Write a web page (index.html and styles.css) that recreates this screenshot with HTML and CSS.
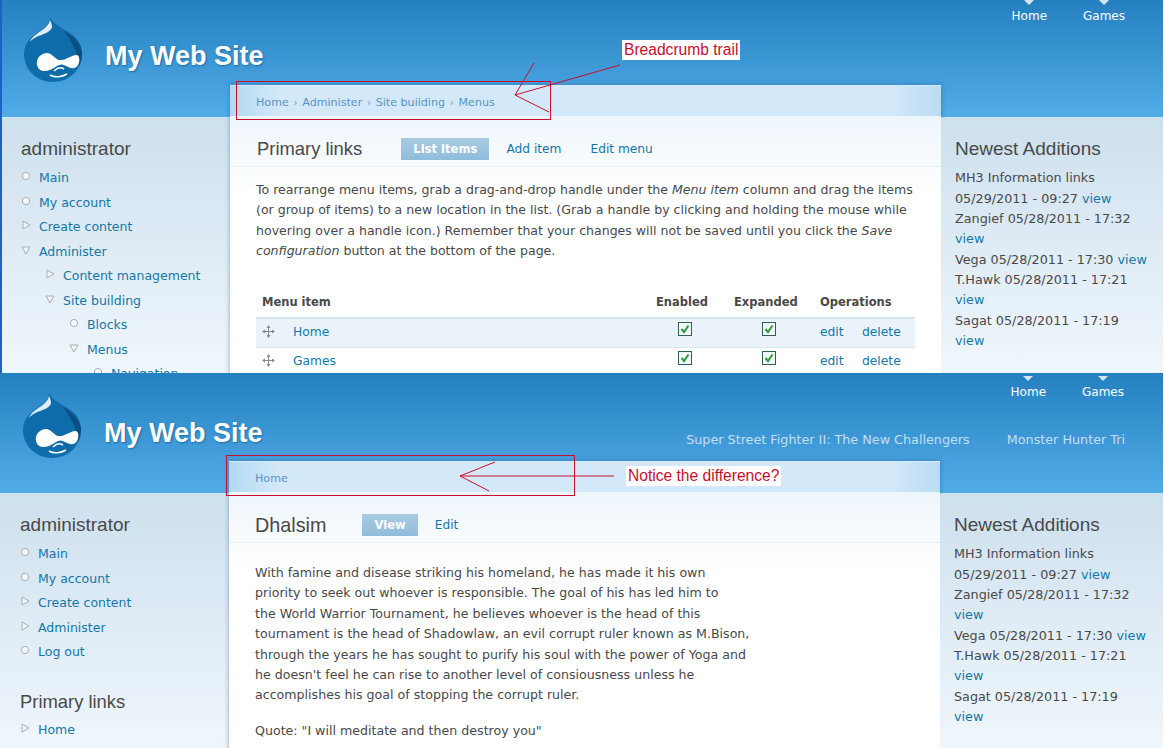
FILE: index.html
```html
<!DOCTYPE html>
<html>
  <head>
    <title>My Web Site</title>
    <link rel="stylesheet" href="styles.css">
  </head>
  <body>
    <svg class="defs" width="0" height="0">
      <defs>
        <symbol id="leaf" viewBox="0 0 10 10"><circle cx="5" cy="5" r="3.6" fill="#f6f8f9" stroke="#a9adb0"/></symbol>
        <symbol id="closed" viewBox="0 0 10 10"><path d="M2 1 L9 5 L2 9 Z" fill="#f3f6f8" stroke="#a9adb0"/></symbol>
        <symbol id="open" viewBox="0 0 10 10"><path d="M1 2 L9 2 L5 9 Z" fill="#f3f6f8" stroke="#a9adb0"/></symbol>
        <symbol id="drag" viewBox="0 0 13 13">
          <path d="M6.5 1 V12 M1 6.5 H12" stroke="#8a8a8a" fill="none"/>
          <path d="M6.5 0 L8.5 3 H4.5 Z M6.5 13 L8.5 10 H4.5 Z M0 6.5 L3 4.5 V8.5 Z M13 6.5 L10 4.5 V8.5 Z" fill="#8a8a8a"/>
        </symbol>
        <symbol id="check" viewBox="0 0 14 14">
          <rect x="0.5" y="0.5" width="13" height="13" fill="#f2f6f4" stroke="#2f5f5c"/>
          <path d="M3.5 7 L6 10 L10.5 3.5" fill="none" stroke="#2f9a3c" stroke-width="2"/>
        </symbol>
        <symbol id="drop" viewBox="0 0 58 65">
          <path d="M26 0 C26 9 16 13 9 19 C3 24 0 30 0 37 C0 53 13 65 29 65 C45 65 58 53 58 37 C58 20 44 15 36 10 C31 7 28 4 26 0 Z" fill="#0f6cab"/>
          <path d="M40 14 C50 20 58 27 58 37 C58 41 57 45 55 49 C55 38 49 26 40 14 Z" fill="#0b4f85"/>
          <path d="M26 3 C25 10 17 13 10 19 C7 22 6 24 6 25 C12 17 26 18 28 10 C28 7 27 5 26 3 Z" fill="#dfeef8"/>
          <path d="M13 44 C14 39 19 36 23 36 C28 36 31 42 35 43 C41 44 49 37 53 38 C56 39 56 45 54 48 C51 53 46 51 42 49 C39 47 36 47 33 49 C29 52 24 54 20 54 C15 54 12 49 13 44 Z" fill="#fff"/>
          <path d="M26 58 C31 61 38 60 43 57 M30 54 C33 51 37 50 40 52" fill="none" stroke="#fff" stroke-width="1.6"/>
        </symbol>
      </defs>
    </svg>

    <div class="page">
      <section class="shot shot-first">
        <header class="top">
          <svg class="logo"><use href="#drop"/></svg>
          <h1 class="site-name">My Web Site</h1>
          <div class="top-links">
            <ul class="primary-nav">
              <li><a href="#">Home</a></li>
              <li><a href="#">Games</a></li>
            </ul>
          </div>
        </header>
        <div class="columns">
          <aside class="sidebar">
            <h2>administrator</h2>
            <ul class="menu">
              <li><svg class="bullet"><use href="#leaf"/></svg><a href="#">Main</a></li>
              <li><svg class="bullet"><use href="#leaf"/></svg><a href="#">My account</a></li>
              <li><svg class="bullet"><use href="#closed"/></svg><a href="#">Create content</a></li>
              <li><svg class="bullet"><use href="#open"/></svg><a href="#">Administer</a>
                <ul class="menu">
                  <li><svg class="bullet"><use href="#closed"/></svg><a href="#">Content management</a></li>
                  <li><svg class="bullet"><use href="#open"/></svg><a href="#">Site building</a>
                    <ul class="menu">
                      <li><svg class="bullet"><use href="#leaf"/></svg><a href="#">Blocks</a></li>
                      <li><svg class="bullet"><use href="#open"/></svg><a href="#">Menus</a>
                        <ul class="menu">
                          <li><svg class="bullet"><use href="#leaf"/></svg><a href="#">Navigation</a></li>
                        </ul>
                      </li>
                    </ul>
                  </li>
                </ul>
              </li>
            </ul>
          </aside>
          <main class="card">
            <div class="breadcrumb">
              <a href="#">Home</a> <span class="sep">›</span> <a href="#">Administer</a> <span class="sep">›</span> <a href="#">Site building</a> <span class="sep">›</span> <a href="#">Menus</a>
            </div>
            <div class="title-row">
              <h2 class="title">Primary links</h2>
              <ul class="tabs">
                <li class="active"><a href="#">List items</a></li>
                <li><a href="#">Add item</a></li>
                <li><a href="#">Edit menu</a></li>
              </ul>
            </div>
            <div class="content">
              <p>To rearrange menu items, grab a drag-and-drop handle under the <em>Menu item</em> column and drag the items (or group of items) to a new location in the list. (Grab a handle by clicking and holding the mouse while hovering over a handle icon.) Remember that your changes will not be saved until you click the <em>Save configuration</em> button at the bottom of the page.</p>
              <table class="items">
                <colgroup>
                  <col class="col-item">
                  <col class="col-enabled">
                  <col class="col-expanded">
                  <col class="col-edit">
                  <col class="col-delete">
                </colgroup>
                <thead>
                  <tr>
                    <th>Menu item</th>
                    <th>Enabled</th>
                    <th>Expanded</th>
                    <th colspan="2">Operations</th>
                  </tr>
                </thead>
                <tbody>
                  <tr class="odd">
                    <td><svg class="drag"><use href="#drag"/></svg><a href="#">Home</a></td>
                    <td class="cell-enabled"><svg class="check"><use href="#check"/></svg></td>
                    <td class="cell-expanded"><svg class="check"><use href="#check"/></svg></td>
                    <td><a href="#">edit</a></td>
                    <td><a href="#">delete</a></td>
                  </tr>
                  <tr>
                    <td><svg class="drag"><use href="#drag"/></svg><a href="#">Games</a></td>
                    <td class="cell-enabled"><svg class="check"><use href="#check"/></svg></td>
                    <td class="cell-expanded"><svg class="check"><use href="#check"/></svg></td>
                    <td><a href="#">edit</a></td>
                    <td><a href="#">delete</a></td>
                  </tr>
                </tbody>
              </table>
            </div>
          </main>
          <aside class="sidebar sidebar-right">
            <h2>Newest Additions</h2>
            <div class="newest">
              <div>MH3 Information links</div>
              <div>05/29/2011 - 09:27 <a href="#">view</a></div>
              <div>Zangief 05/28/2011 - 17:32</div>
              <div><a href="#">view</a></div>
              <div>Vega 05/28/2011 - 17:30 <a href="#">view</a></div>
              <div>T.Hawk 05/28/2011 - 17:21</div>
              <div><a href="#">view</a></div>
              <div>Sagat 05/28/2011 - 17:19</div>
              <div><a href="#">view</a></div>
            </div>
          </aside>
        </div>
      </section>

      <section class="shot shot-second">
        <header class="top">
          <svg class="logo"><use href="#drop"/></svg>
          <h1 class="site-name">My Web Site</h1>
          <div class="top-links">
            <ul class="primary-nav">
              <li><a href="#">Home</a></li>
              <li><a href="#">Games</a></li>
            </ul>
            <ul class="secondary-nav">
              <li><a href="#">Super Street Fighter II: The New Challengers</a></li>
              <li><a href="#">Monster Hunter Tri</a></li>
            </ul>
          </div>
        </header>
        <div class="columns">
          <aside class="sidebar">
            <h2>administrator</h2>
            <ul class="menu">
              <li><svg class="bullet"><use href="#leaf"/></svg><a href="#">Main</a></li>
              <li><svg class="bullet"><use href="#leaf"/></svg><a href="#">My account</a></li>
              <li><svg class="bullet"><use href="#closed"/></svg><a href="#">Create content</a></li>
              <li><svg class="bullet"><use href="#closed"/></svg><a href="#">Administer</a></li>
              <li><svg class="bullet"><use href="#leaf"/></svg><a href="#">Log out</a></li>
            </ul>
            <h2 class="block-gap">Primary links</h2>
            <ul class="menu">
              <li><svg class="bullet"><use href="#closed"/></svg><a href="#">Home</a></li>
            </ul>
          </aside>
          <main class="card">
            <div class="breadcrumb"><a href="#">Home</a></div>
            <div class="title-row">
              <h2 class="title title-node">Dhalsim</h2>
              <ul class="tabs">
                <li class="active"><a href="#">View</a></li>
                <li><a href="#">Edit</a></li>
              </ul>
            </div>
            <div class="content">
              <p class="story">With famine and disease striking his homeland, he has made it his own<br>
              priority to seek out whoever is responsible. The goal of his has led him to<br>
              the World Warrior Tournament, he believes whoever is the head of this<br>
              tournament is the head of Shadowlaw, an evil corrupt ruler known as M.Bison,<br>
              through the years he has sought to purify his soul with the power of Yoga and<br>
              he doesn't feel he can rise to another level of consiousness unless he<br>
              accomplishes his goal of stopping the corrupt ruler.</p>
              <p class="quote">Quote: "I will meditate and then destroy you"</p>
            </div>
          </main>
          <aside class="sidebar sidebar-right">
            <h2>Newest Additions</h2>
            <div class="newest">
              <div>MH3 Information links</div>
              <div>05/29/2011 - 09:27 <a href="#">view</a></div>
              <div>Zangief 05/28/2011 - 17:32</div>
              <div><a href="#">view</a></div>
              <div>Vega 05/28/2011 - 17:30 <a href="#">view</a></div>
              <div>T.Hawk 05/28/2011 - 17:21</div>
              <div><a href="#">view</a></div>
              <div>Sagat 05/28/2011 - 17:19</div>
              <div><a href="#">view</a></div>
            </div>
          </aside>
        </div>
      </section>

      <svg class="marks" width="1164" height="748">
        <g fill="none" stroke="#c8102e">
          <rect x="236.5" y="81.5" width="314" height="38"/>
          <path d="M534 63 L515 95 L620 65 M515 95 L549 112"/>
          <rect x="226.5" y="455.5" width="348" height="40"/>
          <path d="M495 462 L460 476 L489 491 M460 476 H614"/>
        </g>
      </svg>
      <span class="note note-one">Breadcrumb trail</span>
      <span class="note note-two">Notice the difference?</span>
    </div>
  </body>
</html>
```

FILE: styles.css
```css
html,
body {
  margin: 0;
  padding: 0;
  background-color: #fff;
}

body {
  font-family: "DejaVu Sans", Verdana, sans-serif;
  font-size: 12px;
  color: #494949;
}

a {
  color: #1278a8;
  text-decoration: none;
}

ul {
  list-style: none;
  margin: 0;
  padding: 0;
}

.defs {
  position: absolute;
}

.page {
  position: relative;
  width: 1164px;
  height: 748px;
  overflow: hidden;
}

.shot {
  overflow: hidden;
  display: flex;
  flex-direction: column;
  width: 1163px;
  box-sizing: border-box;
}

.shot-first {
  height: 373px;
  border-left: 2px solid #1a62c4;
}

.shot-second {
  height: 375px;
}

/* header */
.top {
  flex: none;
  display: flex;
  height: 118px;
  box-sizing: border-box;
  background: linear-gradient(#2580c0, #52ace8);
  border-bottom: 1px solid #cfe6f5;
}

.shot-second .top {
  height: 121px;
  padding-top: 3px;
}

.logo {
  flex: none;
  width: 58px;
  height: 65px;
  margin: 17px 0 0 22px;
}

.shot-second .logo {
  margin-left: 23px;
}

.site-name {
  flex: none;
  margin: 39px 0 0 23px;
  font-family: "Liberation Sans", Arial, sans-serif;
  font-size: 27px;
  line-height: 34px;
  color: #fff;
  text-shadow: 1px 1px 2px #1d6da6;
}

.shot-second .site-name {
  margin-top: 40px;
}

.top-links {
  flex: 1;
  display: flex;
  flex-direction: column;
  align-items: flex-end;
  padding-right: 37px;
}

.shot-second .top-links {
  padding-right: 38px;
}

.primary-nav {
  display: flex;
  gap: 36px;
  height: 56px;
  padding-right: 1px;
}

.primary-nav li {
  position: relative;
  padding-top: 9px;
  line-height: 15px;
}

.primary-nav li::before {
  content: "";
  position: absolute;
  top: 0;
  left: 50%;
  margin-left: -5px;
  border-left: 5px solid transparent;
  border-right: 5px solid transparent;
  border-top: 5px solid #d6e6f3;
}

.primary-nav a {
  color: #fff;
}

.secondary-nav {
  display: flex;
  gap: 37px;
  font-size: 12.75px;
  line-height: 15px;
}

.secondary-nav a {
  color: #c3dff3;
}

/* columns */
.columns {
  flex: 1;
  display: grid;
  grid-template-columns: 228px 711px 1fr;
  min-height: 0;
}

.shot-second .columns {
  grid-template-columns: 229px 711px 1fr;
}

.sidebar {
  padding: 20px 8px 0 19px;
  height: 420px;
  background: linear-gradient(#cde0ee, #eef5fb 240px);
}

.shot-second .sidebar {
  padding-left: 20px;
}

.sidebar h2,
.title {
  margin: 0;
  font-family: "Liberation Sans", Arial, sans-serif;
  font-size: 19px;
  font-weight: normal;
  line-height: 22px;
  color: #494949;
}

.sidebar > .menu {
  margin-top: 6.3px;
  font-size: 12.5px;
}

.sidebar .block-gap {
  margin-top: 26px;
  font-size: 18.4px;
}

.sidebar .block-gap + .menu {
  margin-top: 5px;
}

.menu li {
  padding-left: 18px;
  position: relative;
  line-height: 24.5px;
}

.menu .menu {
  padding-left: 6px;
}

.bullet {
  position: absolute;
  left: 0;
  top: 5px;
  width: 10px;
  height: 10px;
}

.sidebar-right {
  padding-left: 14px;
  padding-right: 0;
}

.shot-second .sidebar-right {
  padding-left: 14px;
}

.newest {
  margin-top: 8.4px;
  font-size: 12.75px;
  line-height: 20.35px;
}

/* main card */
.card {
  margin-top: -33px;
  height: 420px;
  background: linear-gradient(#e8f2fa, #fff 110px);
  box-shadow: 0 0 5px rgba(30, 80, 130, 0.45);
  border-top: 1px solid #d6ecfa;
  box-sizing: border-box;
}

.breadcrumb {
  height: 31px;
  padding-left: 26px;
  box-sizing: border-box;
  font-size: 11.1px;
  line-height: 33px;
  color: #7aa7c7;
  background: linear-gradient(90deg, #b2d9f3, #d3e9f9 50px, #d3e9f9 660px, #b8dcf4);
  border-bottom: 1px solid #eaf4fb;
}

.breadcrumb a {
  color: #5a94c0;
}

.sep {
  padding: 0 1px;
}

.title-row {
  display: flex;
  align-items: center;
  height: 50px;
  padding: 14px 0 0 27px;
  box-sizing: border-box;
  border-bottom: 1px solid #e2edf4;
}

.title {
  margin-right: 39px;
  font-size: 18.4px;
}

.title-node {
  margin-left: -1px;
  margin-right: 36px;
  font-size: 19.8px;
}

.tabs {
  display: flex;
  gap: 5px;
  font-size: 12.2px;
  line-height: 22px;
}

.tabs a {
  display: block;
  padding: 0 12px;
}

.tabs .active a {
  color: #fff;
  font-size: 11.6px;
  font-weight: bold;
  background: linear-gradient(#a8cbe2, #8fbcdc);
}

.content {
  padding: 0 26px;
  font-size: 12.55px;
  line-height: 20.4px;
}

.content p {
  margin: 13px 0 0;
}

.content .story {
  margin-top: 20px;
  font-size: 12.62px;
}

.content .quote {
  margin-top: 15px;
  font-size: 12.62px;
}

/* menu items table */
.items {
  width: 659px;
  margin-top: 27px;
  border-collapse: collapse;
  table-layout: fixed;
  font-size: 12.3px;
}

.col-item {
  width: 394px;
}

.col-enabled {
  width: 78px;
}

.col-expanded {
  width: 86px;
}

.col-edit {
  width: 42px;
}

.col-delete {
  width: 59px;
}

.items th {
  height: 28px;
  padding: 0 6px;
  text-align: left;
  font-size: 11.5px;
  font-weight: bold;
  border-bottom: 2px solid #d3e6ef;
}

.items td {
  height: 28px;
  padding: 0 6px;
  border-bottom: 1px solid #d9e8f0;
}

.items .cell-enabled {
  padding-left: 28px;
}

.items .cell-expanded {
  padding-left: 34px;
}

.items .odd td {
  background-color: #eaf3fa;
}

.drag {
  width: 13px;
  height: 13px;
  margin-right: 18px;
  vertical-align: -2px;
}

.check {
  display: block;
  width: 14px;
  height: 14px;
  margin-top: -8px;
}

/* red notes drawn over the screenshot */
.marks {
  position: absolute;
  top: 0;
  left: 0;
}

.note {
  position: absolute;
  padding: 0 2px;
  font-family: "Liberation Sans", Arial, sans-serif;
  font-size: 15.6px;
  line-height: 20px;
  color: #c8102e;
  background-color: #fff;
}

.note-one {
  top: 40px;
  left: 622px;
}

.note-two {
  top: 466px;
  left: 626px;
}
```
